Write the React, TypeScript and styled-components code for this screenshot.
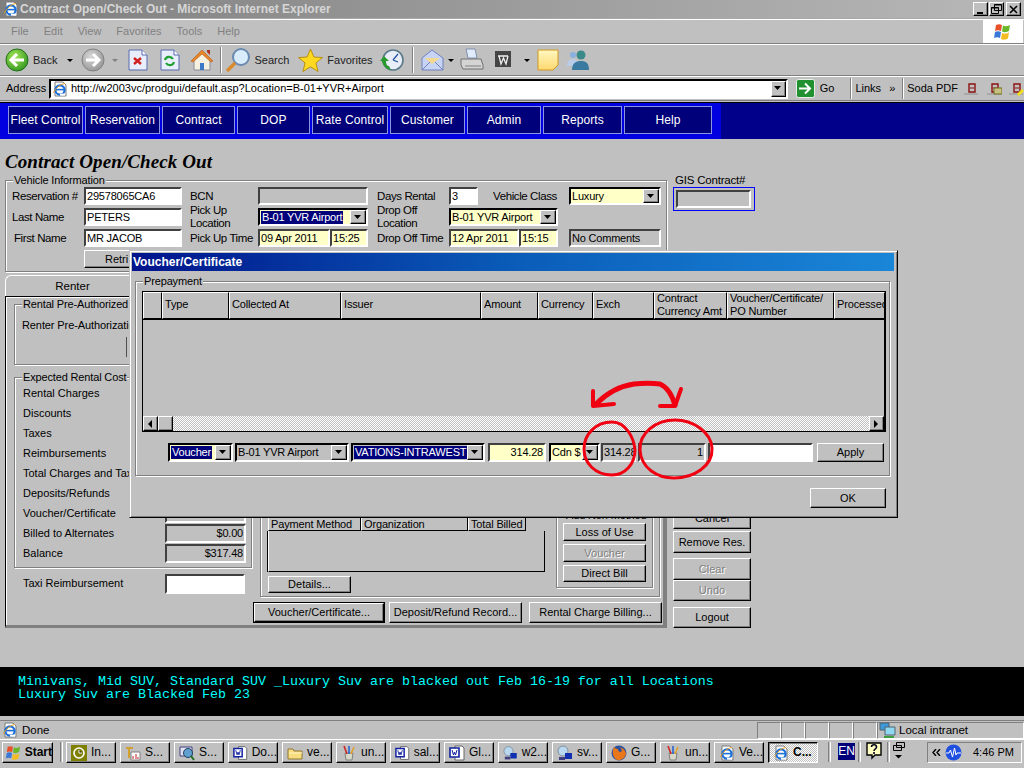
import React from "react";
import styled, { createGlobalStyle, css } from "styled-components";

const GlobalStyle = createGlobalStyle`
  html, body { margin: 0; padding: 0; background: #c0c0c0; overflow: hidden; }
  * { box-sizing: border-box; }
  #root { width: 1024px; height: 768px; }
`;

const raised = css`
  border: 1px solid;
  border-color: #fff #000 #000 #fff;
  box-shadow: inset -1px -1px 0 #808080;
`;
const sunken = css`
  border: 2px solid;
  border-color: #404040 #fff #fff #404040;
`;

const Screen = styled.div`
  position: relative;
  width: 1024px;
  height: 768px;
  overflow: hidden;
  display: flex;
  flex-direction: column;
  background: #c0c0c0;
  color: #000;
  font: 11px/13px "Liberation Sans", Arial, sans-serif;
`;

/* ---------- browser chrome ---------- */
const TitleBar = styled.div`
  height: 19px;
  flex: none;
  display: flex;
  align-items: center;
  padding: 0 3px 0 3px;
  gap: 1px;
  background: linear-gradient(90deg, #7f7f7f, #b8b8b8);
  border-bottom: 1px solid #a8a8a8;
`;
const TitleText = styled.div`
  flex: 1;
  color: #d6d6d6;
  font-size: 12px;
  font-weight: bold;
`;
const CaptionBtn = styled.div`
  width: 15px;
  height: 14px;
  background: #c0c0c0;
  ${raised}
  display: flex;
  align-items: center;
  justify-content: center;
  margin-left: ${(p: { $gap?: number }) => p.$gap ?? 0}px;
`;
const MenuBar = styled.div`
  height: 25px;
  flex: none;
  display: flex;
  align-items: center;
  padding-left: 11px;
  gap: 15px;
  position: relative;
  border-top: 1px solid #fff;
  border-bottom: 1px solid #808080;
  color: #808080;
  font-size: 11px;
`;
const FlagBox = styled.div`
  position: absolute;
  right: 1px;
  top: 0;
  width: 40px;
  height: 23px;
  background: #fff;
  display: flex;
  align-items: center;
  justify-content: center;
`;
const ToolBar = styled.div`
  height: 32px;
  flex: none;
  display: flex;
  align-items: center;
  padding-left: 5px;
  border-top: 1px solid #fff;
  border-bottom: 1px solid #808080;
  font-size: 11px;
  color: #222;
`;
const ToolLabel = styled.span<{ $l?: number; $r?: number }>`
  margin: 0 ${(p) => p.$r ?? 0}px 0 ${(p) => p.$l ?? 0}px;
  white-space: nowrap;
`;
const ToolIcon = styled.span<{ $l?: number }>`
  display: inline-flex;
  margin-left: ${(p) => p.$l ?? 0}px;
`;
const ToolSep = styled.span<{ $l: number; $r: number }>`
  width: 2px;
  height: 26px;
  border-left: 1px solid #808080;
  border-right: 1px solid #fff;
  margin: 0 ${(p) => p.$r}px 0 ${(p) => p.$l}px;
`;
const Caret = styled.span<{ $l: number; $grey?: boolean }>`
  width: 0;
  height: 0;
  margin-left: ${(p) => p.$l}px;
  border: 3px solid transparent;
  border-top: 3px solid ${(p) => (p.$grey ? "#808080" : "#000")};
  border-bottom: 0;
`;
const AddressBar = styled.div`
  height: 25px;
  flex: none;
  display: flex;
  align-items: center;
  padding-left: 6px;
  border-top: 1px solid #fff;
  border-bottom: 1px solid #808080;
  font-size: 11px;
  white-space: nowrap;
`;
const AddressLabel = styled.span`
  width: 38px;
  flex: none;
`;
const AddressField = styled.div`
  width: 741px;
  height: 20px;
  margin-left: 5px;
  background: #fff;
  ${sunken}
  border-color: #000 #fff #fff #000;
  display: flex;
  align-items: center;
  padding-left: 1px;
  gap: 3px;
  position: relative;
  white-space: nowrap;
`;
const AddrDrop = styled.div`
  position: absolute;
  right: 0;
  top: 0;
  width: 15px;
  height: 16px;
  background: #c0c0c0;
  ${raised}
  display: flex;
  align-items: center;
  justify-content: center;
`;
const AddrSep = styled.span<{ $l: number; $r: number }>`
  width: 2px;
  height: 21px;
  border-left: 1px solid #808080;
  border-right: 1px solid #fff;
  margin: 0 ${(p) => p.$r}px 0 ${(p) => p.$l}px;
`;

/* ---------- site nav ---------- */
const NavBand = styled.div`
  height: 37px;
  flex: none;
  margin-top: 1px;
  background: #00008b;
  border-top: 1px solid #000;
`;
const NavInner = styled.div`
  width: 721px;
  height: 36px;
  padding: 3px 0 0 8px;
  display: flex;
  gap: 2px;
  background: #0000e0;
`;
const NavBtn = styled.div<{ $w: number }>`
  width: ${(p) => p.$w}px;
  height: 28px;
  background: #00007a;
  border: 1px solid #8c96e0;
  color: #fff;
  font-size: 12px;
  letter-spacing: 0.1px;
  display: flex;
  align-items: center;
  justify-content: center;
  white-space: nowrap;
`;

/* ---------- page ---------- */
const Content = styled.div`
  flex: 1;
  min-height: 0;
  padding: 13px 0 0 5px;
  display: flex;
  flex-direction: column;
`;
const PageTitle = styled.h1`
  margin: 0;
  height: 20px;
  font: italic bold 19px/20px "Liberation Serif", "Times New Roman", serif;
  letter-spacing: 0.1px;
`;
const TopRow = styled.div`
  display: flex;
  margin-top: 8px;
`;
const Group = styled.div<{ $w?: number; $h?: number }>`
  position: relative;
  ${(p) => (p.$w ? `width: ${p.$w}px;` : "")}
  ${(p) => (p.$h ? `height: ${p.$h}px;` : "")}
  border: 1px solid #808080;
  box-shadow: 1px 1px 0 #fff, inset 1px 1px 0 #fff;
  flex: none;
`;
const Legend = styled.div<{ $l?: number }>`
  position: absolute;
  top: -7px;
  left: ${(p) => p.$l ?? 7}px;
  padding: 0 1px;
  background: #c0c0c0;
  white-space: nowrap;
  font-size: 11px;
  letter-spacing: -0.15px;
`;
const VehicleGrid = styled.div`
  display: grid;
  grid-template-columns: 72px 98px 8px 68px 72px 38px 9px 72px 70px 39px 11px 92px;
  grid-auto-rows: 21px;
  padding: 6px 0 0 6px;
  height: 90px;
`;
const Cell = styled.div<{ $c: number; $s?: number; $r?: number; $rs?: number }>`
  grid-column: ${(p) => p.$c} / span ${(p) => p.$s ?? 1};
  ${(p) => (p.$r ? `grid-row: ${p.$r} / span ${p.$rs ?? 1};` : "")}
  min-width: 0;
  display: flex;
  align-items: center;
  height: 18px;
  white-space: nowrap;
`;
const Label = styled.span<{ $l?: number }>`
  font-size: 11.5px;
  letter-spacing: -0.4px;
  padding-left: ${(p) => Math.max(p.$l ?? 0, 0)}px;
  line-height: 13px;
  white-space: ${(p) => (p.$l === -1 ? "normal" : "inherit")};
`;
const Field = styled.div<{ $bg?: string; $right?: boolean; $w?: number; $h?: number }>`
  ${(p) => (p.$w ? `width: ${p.$w}px; flex: none;` : "width: 100%;")}
  height: ${(p) => p.$h ?? 18}px;
  background: ${(p) => p.$bg ?? "#fff"};
  ${sunken}
  display: flex;
  align-items: center;
  justify-content: ${(p) => (p.$right ? "flex-end" : "flex-start")};
  padding: 0 1px;
  font-size: 11px;
  overflow: hidden;
  white-space: nowrap;
  letter-spacing: -0.2px;
`;
const Drop = styled.div`
  position: absolute;
  right: 0;
  top: 0;
  bottom: 0;
  width: 16px;
  background: #c0c0c0;
  ${raised}
  display: flex;
  align-items: center;
  justify-content: center;
`;
const SelectField = styled(Field)`
  position: relative;
  border-color: #000 #fff #fff #000;
`;
const Selected = styled.span`
  background: #00007b;
  color: #fff;
  padding: 0 1px;
  line-height: 13px;
`;
const Btn = styled.div<{ $w?: number; $h?: number; $off?: boolean; $def?: boolean; $pad?: number }>`
  ${(p) => (p.$w ? `width: ${p.$w}px; flex: none;` : "width: 100%;")}
  height: ${(p) => p.$h ?? 18}px;
  background: #c0c0c0;
  ${raised}
  ${(p) => (p.$def ? "outline: 1px solid #000; outline-offset: -1px; border-width: 2px;" : "")}
  display: flex;
  align-items: center;
  justify-content: ${(p) => (p.$pad ? "flex-start" : "center")};
  padding-left: ${(p) => p.$pad ?? 0}px;
  font-size: 11px;
  white-space: nowrap;
  overflow: hidden;
  color: ${(p) => (p.$off ? "#808080" : "#000")};
  text-shadow: ${(p) => (p.$off ? "1px 1px 0 #fff" : "none")};
`;
const GisBlock = styled.div`
  margin-left: 6px;
  width: 82px;
`;
const GisLabel = styled.div`
  font-size: 11.5px;
  letter-spacing: -0.2px;
  margin: -6px 0 0 2px;
  height: 13px;
`;
const GisFocus = styled.div`
  border: 1px solid #0000ff;
  width: 82px;
  height: 24px;
  padding: 2px 3px 2px 2px;
`;
const MainRow = styled.div`
  display: flex;
  margin-top: 3px;
`;
const TabColumn = styled.div`
  width: 662px;
  flex: none;
`;
const Tab = styled.div`
  width: 135px;
  height: 21px;
  border: 1px solid #000;
  border-top-color: #fff;
  border-left-color: #fff;
  border-bottom: 0;
  border-radius: 6px 0 0 0;
  display: flex;
  align-items: center;
  justify-content: center;
  font-size: 11.5px;
`;
const TabPanel = styled.div`
  height: 332px;
  border-top: 1px solid #000;
  border-left: 1px solid #000;
  border-right: 4px solid #808080;
  border-bottom: 3px solid #808080;
  box-shadow: inset 1px 1px 0 #fff;
  padding: 7px 0 0 8px;
  display: flex;
`;
const LeftColumn = styled.div`
  width: 239px;
  flex: none;
`;
const PreAuthText = styled.div`
  padding: 14px 0 0 7px;
  font-size: 11px;
  letter-spacing: -0.1px;
  white-space: nowrap;
`;
const PreAuthBtn = styled.div`
  position: absolute;
  left: 111px;
  top: 32px;
  width: 80px;
  height: 20px;
  background: #c0c0c0;
  border-left: 1px solid #505050;
`;
const CostGroup = styled(Group)`
  margin-top: 12px;
`;
const CostList = styled.div`
  padding: 5px 5px 0 8px;
`;
const CostRow = styled.div`
  height: 20px;
  display: flex;
  align-items: center;
  justify-content: space-between;
  font-size: 11px;
  white-space: nowrap;
`;
const TaxiRow = styled.div`
  display: flex;
  align-items: center;
  justify-content: space-between;
  width: 222px;
  margin: 6px 0 0 9px;
  font-size: 11px;
`;
const TaxiLabel = styled.span`
  margin-top: -2px;
`;
const RightColumn = styled.div`
  width: 410px;
  flex: none;
`;
const BillingGroup = styled(Group)`
  margin-left: 7px;
  display: flex;
  align-items: flex-end;
  padding: 0 6px 8px 7px;
  justify-content: space-between;
`;
const PaymentColumn = styled.div`
  width: 277px;
  margin-bottom: -5px;
`;
const PaymentList = styled.div`
  height: 41px;
  border: 1px solid #000;
  border-top: 0;
  border-left-color: #fff;
  box-shadow: -1px 0 0 #000;
`;
const PaymentHead = styled.div`
  display: flex;
  height: 14px;
`;
const DetailsBtn = styled(Btn)`
  margin-top: 4px;
`;
const HeadCell = styled.div<{ $w: number; $lines?: boolean }>`
  width: ${(p) => p.$w}px;
  flex: none;
  height: 100%;
  background: #c0c0c0;
  border: 1px solid;
  border-color: #fff #000 #000 #fff;
  padding-left: 2px;
  display: flex;
  align-items: center;
  font-size: 11px;
  letter-spacing: -0.15px;
  white-space: ${(p) => (p.$lines ? "pre" : "nowrap")};
  overflow: hidden;
`;
const NonMethodGroup = styled(Group)`
  padding: 0 6px 5px;
  display: flex;
  flex-direction: column;
  justify-content: flex-end;
  gap: 3px;
`;
const BottomButtons = styled.div`
  display: flex;
  gap: 4px;
  margin-top: 5px;
`;
const RentalBillingBtn = styled(Btn)`
  margin-left: 3px;
`;
const ActionColumn = styled.div`
  width: 78px;
  margin-left: 6px;
  padding-top: 232px;
  display: flex;
  flex-direction: column;
`;
const ActionBtn = styled(Btn)<{ $top?: number }>`
  margin-top: ${(p) => p.$top ?? 0}px;
`;

/* ---------- ticker & status ---------- */
const Ticker = styled.div`
  height: 49px;
  flex: none;
  background: #000;
  color: #00ffff;
  padding: 8px 0 0 18px;
  font: 13.33px/13px "Liberation Mono", "Courier New", monospace;
  white-space: pre;
`;
const StatusBar = styled.div`
  height: 19px;
  flex: none;
  margin-top: 4px;
  border-top: 1px solid #808080;
  display: flex;
  align-items: center;
  padding-left: 2px;
  font-size: 11.5px;
  gap: 4px;
`;
const StatusCells = styled.div`
  display: flex;
`;
const StatusCell = styled.div<{ $w: number }>`
  width: ${(p) => p.$w}px;
  height: 17px;
  border: 1px solid;
  border-color: #808080 #fff #fff #808080;
  flex: none;
  display: flex;
  align-items: center;
  gap: 3px;
  padding-left: 1px;
`;
const StatusFill = styled.span`
  flex: 1;
`;
const TaskBar = styled.div`
  height: 29px;
  flex: none;
  border-top: 1px solid #fff;
  padding: 2px 0 0 2px;
  display: flex;
  align-items: flex-start;
  font-size: 12px;
`;
const StartBtn = styled.div`
  width: 51px;
  height: 21px;
  background: #c0c0c0;
  ${raised}
  display: flex;
  align-items: center;
  gap: 2px;
  padding-left: 2px;
  font-weight: bold;
`;
const TaskSep = styled.span<{ $l: number; $r: number }>`
  width: 3px;
  height: 20px;
  border-left: 1px solid #808080;
  border-right: 1px solid #fff;
  margin: 0 ${(p) => p.$r}px 0 ${(p) => p.$l}px;
  flex: none;
`;
const TaskBtn = styled.div<{ $active?: boolean }>`
  width: 50px;
  height: 21px;
  margin-right: 4px;
  flex: none;
  ${raised}
  display: flex;
  align-items: center;
  gap: 4px;
  padding-left: 4px;
  white-space: nowrap;
  ${(p) =>
    p.$active
      ? `border-color:#000 #fff #fff #000; box-shadow: inset 1px 1px 0 #808080; font-weight:bold;
         background: repeating-conic-gradient(#fff 0 25%, #c0c0c0 0 50%) 0 0 / 2px 2px;`
      : "background:#c0c0c0;"}
`;
const EnBox = styled.div`
  width: 17px;
  height: 17px;
  margin-top: 1px;
  background: #00007b;
  color: #fff;
  font-size: 12px;
  display: flex;
  align-items: center;
  justify-content: center;
`;
const Tray = styled.div`
  width: 95px;
  height: 21px;
  margin-left: 22px;
  border: 1px solid;
  border-color: #808080 #fff #fff #808080;
  display: flex;
  align-items: center;
  padding-left: 4px;
  font-size: 11px;
`;

/* ---------- dialog ---------- */
const Dialog = styled.div`
  position: absolute;
  left: 129px;
  top: 250px;
  width: 769px;
  height: 268px;
  background: #c0c0c0;
  border: 1px solid;
  border-color: #c0c0c0 #000 #000 #c0c0c0;
  box-shadow: inset 1px 1px 0 #fff, inset -1px -1px 0 #808080;
  padding: 2px 3px 0 2px;
  display: flex;
  flex-direction: column;
`;
const DialogTitle = styled.div`
  height: 18px;
  flex: none;
  background: linear-gradient(90deg, #00148c 0%, #0a5cb8 50%, #1a86d8 100%);
  color: #fff;
  font-weight: bold;
  font-size: 12px;
  display: flex;
  align-items: center;
  padding-left: 1px;
`;
const PrepayGroup = styled(Group)`
  margin: 10px 0 0 3px;
  padding: 9px 0 0 6px;
`;
const GridBox = styled.div`
  width: 744px;
  height: 141px;
  border: 1px solid #000;
  border-right-width: 2px;
  display: flex;
  flex-direction: column;
`;
const GridHead = styled.div`
  display: flex;
  height: 28px;
  flex: none;
  border-bottom: 1px solid #000;
  & > div {
    padding-bottom: 2px;
  }
`;
const GridBody = styled.div`
  flex: 1;
`;
const ScrollBar = styled.div`
  height: 15px;
  flex: none;
  display: flex;
  background: repeating-conic-gradient(#fff 0 25%, #c0c0c0 0 50%) 0 0 / 2px 2px;
`;
const ScrollBtn = styled.div<{ $w?: number }>`
  width: ${(p) => p.$w ?? 15}px;
  height: 15px;
  background: #c0c0c0;
  ${raised}
  display: flex;
  align-items: center;
  justify-content: center;
  flex: none;
`;
const ScrollFill = styled.div`
  flex: 1;
`;
const EntryRow = styled.div`
  display: flex;
  align-items: flex-start;
  padding: 11px 0 0 26px;
`;
const EntryField = styled(Field)<{ $gap?: number }>`
  margin-right: ${(p) => p.$gap ?? 2}px;
`;
const EntrySelect = styled(SelectField)<{ $gap?: number }>`
  margin-right: ${(p) => p.$gap ?? 2}px;
`;
const DialogFooter = styled.div`
  display: flex;
  justify-content: flex-end;
  padding: 12px 8px 0 0;
`;
const Annotation = styled.svg`
  position: absolute;
  left: 0;
  top: 0;
  pointer-events: none;
`;

/* ---------- icons ---------- */
const IeIcon = ({ s = 16, page = false }: { s?: number; page?: boolean }) => (
  <svg width={s} height={s} viewBox="0 0 16 16">
    {page && <path d="M3 1h8l3 3v11H3z" fill="#fff" stroke="#7a7a7a" />}
    <circle cx="8" cy="9" r="4.6" fill="none" stroke="#1c6fd8" strokeWidth="2.2" />
    <path d="M3.5 8.6h9" stroke="#1c6fd8" strokeWidth="1.6" />
    <path d="M8 13.6h5" stroke="#fff" strokeWidth="2" />
    <path d="M1.5 12C3 8 8 3 13 2.5" stroke="#e8a020" strokeWidth="1" fill="none" />
  </svg>
);
const ArrowCircle = ({ a, b, c, dir = 1 }: { a: string; b: string; c: string; dir?: number }) => (
  <svg width="24" height="24" viewBox="0 0 24 24">
    <defs>
      <radialGradient id={`g${a.slice(1)}`} cx="0.4" cy="0.35" r="0.8">
        <stop offset="0" stopColor={a} />
        <stop offset="1" stopColor={b} />
      </radialGradient>
    </defs>
    <circle cx="12" cy="12" r="11" fill={`url(#g${a.slice(1)})`} stroke={c} />
    <path
      d={dir > 0 ? "M19 12H7m5-6-6 6 6 6" : "M5 12h12m-5-6 6 6-6 6"}
      stroke="#fff"
      strokeWidth="3"
      fill="none"
    />
  </svg>
);
const PageIcon = ({ children }: { children: React.ReactNode }) => (
  <svg width="20" height="22" viewBox="0 0 20 22">
    <path d="M1 1h13l5 5v15H1z" fill="#e8eefc" stroke="#5a6ab0" />
    <path d="M14 1v5h5" fill="#fff" stroke="#5a6ab0" />
    {children}
  </svg>
);
const HomeIcon = () => (
  <svg width="24" height="24" viewBox="0 0 24 24">
    <path d="M4 12v10h16V12L12 5z" fill="#f5f0e0" stroke="#8a8a9a" />
    <path d="M1 13 12 2l11 11-2 1-9-8-9 8z" fill="#e8852a" stroke="#b05a10" strokeWidth=".6" />
    <path d="M10 15h4v7h-4z" fill="#3c78c8" />
    <path d="M17 2h3v5l-3-3z" fill="#b03020" />
  </svg>
);
const SearchIcon = () => (
  <svg width="26" height="26" viewBox="0 0 26 26">
    <circle cx="16" cy="10" r="8" fill="#d8ecfc" stroke="#6a8ab0" strokeWidth="2" />
    <path d="M10 16 2 24" stroke="#d88a30" strokeWidth="3.4" />
  </svg>
);
const StarIcon = () => (
  <svg width="25" height="25" viewBox="0 0 25 25">
    <path d="M12.5 1l3.4 8 8.6.6-6.6 5.4 2.2 8.5-7.6-4.7-7.6 4.7 2.2-8.5L.5 9.6l8.6-.6z" fill="#ffd820" stroke="#b89010" />
  </svg>
);
const HistoryIcon = () => (
  <svg width="24" height="24" viewBox="0 0 24 24">
    <circle cx="13" cy="12" r="10" fill="#e8eef8" stroke="#5a7a8a" strokeWidth="1.6" />
    <path d="M13 12 18 6M13 12l5 2" stroke="#2050a0" strokeWidth="1.2" />
    <path d="M2 13c1 5 4 8 9 9l-2-4c-2 0-3-2-3-5h3L4 8 0 13z" fill="#2a9a30" />
  </svg>
);
const MailIcon = () => (
  <svg width="23" height="22" viewBox="0 0 23 22">
    <path d="M1 9 11 1l11 8v12H1z" fill="#c8d4f4" stroke="#7080c0" />
    <path d="M4 9h15l-8 6z" fill="#f4d890" />
    <path d="M1 21 9 13M22 21l-8-8" stroke="#7080c0" />
  </svg>
);
const PrintIcon = () => (
  <svg width="24" height="24" viewBox="0 0 24 24">
    <path d="M6 1h9l2 9H8z" fill="#e0ecfc" stroke="#8090b0" />
    <path d="M1 11h20l2 6v4H3l-2-4z" fill="#d4d4d4" stroke="#707070" />
    <path d="M5 18h16" stroke="#808080" />
  </svg>
);
const EditIcon = () => (
  <svg width="18" height="18" viewBox="0 0 18 18">
    <path d="M0 0h16v16H0z" fill="#444" />
    <path d="M3 5h10M4 5l2 8 2.500-6 2.500 6 2-8" stroke="#eee" strokeWidth="1.3" fill="none" />
  </svg>
);
const NoteIcon = () => (
  <svg width="22" height="22" viewBox="0 0 22 22">
    <defs>
      <linearGradient id="note" x1="0" y1="0" x2="0" y2="1">
        <stop offset="0" stopColor="#fff8c0" />
        <stop offset="1" stopColor="#ffd870" />
      </linearGradient>
    </defs>
    <path d="M1 1h20v15l-5 5H1z" fill="url(#note)" stroke="#d09a20" />
  </svg>
);
const BuddyIcon = () => (
  <svg width="24" height="22" viewBox="0 0 24 22">
    <circle cx="7" cy="6" r="3" fill="#8ab0e0" />
    <path d="M1 17c0-5 3-7 6-7s5 2 5 7z" fill="#b8cce8" />
    <circle cx="15" cy="6" r="4.500" fill="#3a8a8a" />
    <path d="M6 21c0-7 4-9 9-9s8 2 8 9z" fill="#3a7aa0" />
  </svg>
);
const Flag = ({ s = 20 }: { s?: number }) => (
  <svg width={s} height={s} viewBox="0 0 20 20">
    <path d="M3 3c2-1 4-1 6 0l-1 6c-2-1-4-1-6 0z" fill="#e8502a" />
    <path d="M10 3.500c2 1 4 1 7-.5l-1 6c-3 1.500-5 1.500-7 .5z" fill="#6ab82a" />
    <path d="M2 10c2-1 4-1 6 0l-1 6c-2-1-4-1-6 0z" fill="#3a78d8" />
    <path d="M9 11c2 1 4 1 7-.5l-1 6c-3 1.500-5 1.500-7 .5z" fill="#f4bc20" />
  </svg>
);
const GoIcon = () => (
  <svg width="19" height="19" viewBox="0 0 19 19">
    <rect x=".5" y=".5" width="18" height="18" rx="2" fill="#209030" stroke="#e8f0e8" />
    <path d="M3 9.500h11m-5-5 5 5-5 5" stroke="#fff" strokeWidth="2" fill="none" />
  </svg>
);
const SodaIcon = ({ extra }: { extra?: "mail" | "pen" }) => (
  <svg width="15" height="15" viewBox="0 0 15 15">
    <path d="M5 3h6v8H5z" fill="none" stroke="#8a1010" strokeWidth="1.4" />
    <path d="M6 7h4" stroke="#8a1010" />
    <path d="M0 13h14" stroke="#909090" />
    {extra === "mail" && <path d="M7 7h8v6H7z" fill="#c8c080" stroke="#707020" />}
    {extra === "pen" && <path d="M9 14l5-5" stroke="#f0e020" strokeWidth="3" />}
  </svg>
);
const DownArrow = () => (
  <svg width="8" height="5" viewBox="0 0 8 5">
    <path d="M0 0h7L3.500 4z" fill="#000" />
  </svg>
);
const SideArrow = ({ left }: { left?: boolean }) => (
  <svg width="5" height="8" viewBox="0 0 5 8">
    <path d={left ? "M4 0v8L0 4z" : "M0 0v8l4-4z"} fill="#000" />
  </svg>
);
const WordIcon = () => (
  <svg width="16" height="16" viewBox="0 0 16 16">
    <path d="M6 1h7l2 2v12H6z" fill="#fff" stroke="#666" />
    <path d="M1 3h9v9H1z" fill="#fff" stroke="#1020a0" strokeWidth="1.600" />
    <path d="M3 5l1.500 5L5.500 7l1 3L8 5" stroke="#1020a0" fill="none" />
  </svg>
);
const FolderIcon = () => (
  <svg width="16" height="16" viewBox="0 0 16 16">
    <path d="M1 4h5l1 2h8v8H1z" fill="#f8dc80" stroke="#907830" />
    <path d="M2 8h13" stroke="#fff4c0" />
  </svg>
);
const TimerIcon = () => (
  <svg width="16" height="16" viewBox="0 0 16 16">
    <path d="M0 0h16v16H0z" fill="#808000" />
    <circle cx="8" cy="8" r="5" fill="none" stroke="#fff" strokeWidth="1.600" />
    <path d="M8 5v3h3" stroke="#fff" />
  </svg>
);
const ToolsIcon = () => (
  <svg width="16" height="16" viewBox="0 0 16 16">
    <path d="M6 7h9v8H6z" fill="#fff" stroke="#808080" />
    <path d="M8 11v3M11 9v5M13 12v2" stroke="#c02020" />
    <path d="M1 2h7v2H5v9H3V4H1z" fill="#d0a030" />
  </svg>
);
const GlobeIcon = () => (
  <svg width="16" height="16" viewBox="0 0 16 16">
    <path d="M1 2h12v9H1z" fill="#e0e0f0" stroke="#404080" />
    <circle cx="9" cy="8" r="4.500" fill="#60a0d0" stroke="#204060" />
    <path d="M12 11l3 4" stroke="#207020" strokeWidth="2" />
  </svg>
);
const PaintIcon = () => (
  <svg width="16" height="16" viewBox="0 0 16 16">
    <path d="M4 8h8l-1 7H5z" fill="#d8d8c8" stroke="#808080" />
    <path d="M6 9 3 1" stroke="#d02020" strokeWidth="1.500" />
    <path d="M8 9V1" stroke="#2060d0" strokeWidth="1.500" />
    <path d="M10 9l3-7" stroke="#e0a020" strokeWidth="1.500" />
  </svg>
);
const NetIcon = () => (
  <svg width="16" height="16" viewBox="0 0 16 16">
    <circle cx="6" cy="6" r="5" fill="#b8d8f0" stroke="#8090a0" />
    <path d="M8 8h7v6H8z" fill="#1030b0" />
    <path d="M2 12h6v3H2z" fill="#404080" />
  </svg>
);
const FoxIcon = () => (
  <svg width="16" height="16" viewBox="0 0 16 16">
    <circle cx="8" cy="8" r="7.500" fill="#2a50a0" />
    <path d="M3 2C1 6 1 12 6 15c5 1 9-3 9-7-1-3-3-5-6-6 2 2 2 4 1 5-2 0-3-1-3-3-2 0-3-1-4-2z" fill="#e8761a" />
  </svg>
);
const HelpIcon = () => (
  <svg width="16" height="18" viewBox="0 0 16 18">
    <path d="M1 1h14v12H9l-3 3v-3H1z" fill="#ffffc0" stroke="#000" strokeWidth="1.400" />
    <path d="M5.500 5c0-3 5-3 5 0 0 2-2.500 2-2.500 4M8 10v2" stroke="#000020" strokeWidth="1.600" fill="none" />
  </svg>
);
const WindowsIcon = () => (
  <svg width="12" height="18" viewBox="0 0 12 18">
    <path d="M3.500.5h8v5h-8zM.5 3.500h8v5h-8z" fill="#c0c0c0" stroke="#000" />
    <path d="M2 13h7l-3.500 3.500z" fill="#000" />
  </svg>
);
const PulseIcon = () => (
  <svg width="17" height="17" viewBox="0 0 17 17">
    <circle cx="8.500" cy="8.500" r="8" fill="#2050e0" />
    <path d="M1 9h3l1.500-3 2 7 2-9 1.500 7 1-2h4" stroke="#fff" fill="none" />
  </svg>
);
const DoubleChevron = () => (
  <svg width="9" height="7" viewBox="0 0 9 7">
    <path d="M4 0 1 3.500 4 7M8 0 5 3.500 8 7" stroke="#000" strokeWidth="1.400" fill="none" />
  </svg>
);
const NetZoneIcon = () => (
  <svg width="17" height="17" viewBox="0 0 17 17">
    <path d="M1 1h9v7H1z" fill="#3a9ad8" stroke="#506070" />
    <path d="M6 5h10v8H6z" fill="#90d8f0" stroke="#506070" />
    <path d="M5 15h10" stroke="#40a040" strokeWidth="2" />
  </svg>
);

const navItems: [string, number][] = [
  ["Fleet Control", 75], ["Reservation", 75], ["Contract", 73], ["DOP", 73], ["Rate Control", 76],
  ["Customer", 75], ["Admin", 74], ["Reports", 79], ["Help", 88],
];
const gridCols: [string, number, boolean?][] = [
  ["", 19], ["Type", 67], ["Collected At", 112], ["Issuer", 140], ["Amount", 57], ["Currency", 55], ["Exch", 61],
  ["Contract\nCurrency Amt", 73, true], ["Voucher/Certificate/\nPO Number", 107, true], ["Processed", 51],
];
const costRows: [string, string?][] = [
  ["Rental Charges"], ["Discounts"], ["Taxes"], ["Reimbursements"], ["Total Charges and Taxes"],
  ["Deposits/Refunds"], ["Voucher/Certificate"], ["Billed to Alternates", "$0.00"], ["Balance", "$317.48"],
];
const taskItems: [React.ReactNode, string][] = [
  [<TimerIcon />, "In..."], [<ToolsIcon />, "S..."], [<GlobeIcon />, "S..."], [<WordIcon />, "Do..."],
  [<FolderIcon />, "ve..."], [<PaintIcon />, "un..."], [<WordIcon />, "sal..."], [<WordIcon />, "Gl..."],
  [<NetIcon />, "w2..."], [<NetIcon />, "sv..."], [<FoxIcon />, "G..."], [<PaintIcon />, "un..."],
  [<IeIcon page />, "Ve..."],
];

export default function App() {
  return (
    <Screen>
      <GlobalStyle />
      <TitleBar>
        <IeIcon page />
        <TitleText>Contract Open/Check Out - Microsoft Internet Explorer</TitleText>
        <CaptionBtn>
          <svg width="9" height="9" viewBox="0 0 9 9"><path d="M1 7h6v2H1z" fill="#000" /></svg>
        </CaptionBtn>
        <CaptionBtn $gap={0}>
          <svg width="11" height="10" viewBox="0 0 11 10">
            <path d="M3.500.5h7v6h-7zM.5 3.500h7v6h-7z" fill="none" stroke="#000" />
            <path d="M3 1h8M0 4h8" stroke="#000" />
          </svg>
        </CaptionBtn>
        <CaptionBtn $gap={1}>
          <svg width="9" height="9" viewBox="0 0 9 9"><path d="M1 1l7 7M8 1 1 8" stroke="#000" strokeWidth="1.600" /></svg>
        </CaptionBtn>
      </TitleBar>
      <MenuBar>
        {["File", "Edit", "View", "Favorites", "Tools", "Help"].map((m) => (
          <span key={m}>{m}</span>
        ))}
        <FlagBox><Flag /></FlagBox>
      </MenuBar>
      <ToolBar>
        <ArrowCircle a="#a8e858" b="#208a18" c="#207018" />
        <ToolLabel $l={4}>Back</ToolLabel>
        <Caret $l={10} />
        <ToolIcon $l={8}><ArrowCircle a="#d8d8d8" b="#8c8c8c" c="#808080" dir={-1} /></ToolIcon>
        <Caret $l={7} $grey />
        <ToolIcon $l={10}>
          <PageIcon><path d="M6 9l7 6M13 9l-7 6" stroke="#d02020" strokeWidth="2.400" /></PageIcon>
        </ToolIcon>
        <ToolIcon $l={12}>
          <PageIcon><path d="M5 11c1-4 6-4 8-1M14 13c-1 4-6 4-8 1" stroke="#20a030" strokeWidth="2.200" fill="none" /></PageIcon>
        </ToolIcon>
        <ToolIcon $l={10}><HomeIcon /></ToolIcon>
        <ToolSep $l={6} $r={3} />
        <SearchIcon />
        <ToolLabel $l={3}>Search</ToolLabel>
        <ToolIcon $l={9}><StarIcon /></ToolIcon>
        <ToolLabel $l={4}>Favorites</ToolLabel>
        <ToolIcon $l={7}><HistoryIcon /></ToolIcon>
        <ToolSep $l={8} $r={7} />
        <MailIcon />
        <Caret $l={4} />
        <ToolIcon $l={6}><PrintIcon /></ToolIcon>
        <ToolIcon $l={11}><EditIcon /></ToolIcon>
        <Caret $l={11} />
        <ToolIcon $l={7}><NoteIcon /></ToolIcon>
        <ToolIcon $l={7}><BuddyIcon /></ToolIcon>
      </ToolBar>
      <AddressBar>
        <AddressLabel>Address</AddressLabel>
        <AddressField>
          <IeIcon page />
          <span>http://w2003vc/prodgui/default.asp?Location=B-01+YVR+Airport</span>
          <AddrDrop><DownArrow /></AddrDrop>
        </AddressField>
        <ToolIcon $l={8}><GoIcon /></ToolIcon>
        <ToolLabel $l={5}>Go</ToolLabel>
        <AddrSep $l={16} $r={3} />
        <span>Links</span>
        <ToolLabel $l={8}>»</ToolLabel>
        <AddrSep $l={7} $r={3} />
        <span>Soda PDF</span>
        <ToolIcon $l={6}><SodaIcon /></ToolIcon>
        <ToolIcon $l={8}><SodaIcon extra="mail" /></ToolIcon>
        <ToolIcon $l={7}><SodaIcon extra="pen" /></ToolIcon>
      </AddressBar>

      <NavBand>
        <NavInner>
          {navItems.map(([label, w]) => (
            <NavBtn key={label} $w={w}>{label}</NavBtn>
          ))}
        </NavInner>
      </NavBand>

      <Content>
        <PageTitle>Contract Open/Check Out</PageTitle>
        <TopRow>
          <Group $w={662}>
            <Legend>Vehicle Information</Legend>
            <VehicleGrid>
              <Cell $c={1} $r={1}><Label>Reservation #</Label></Cell>
              <Cell $c={2} $r={1}><Field>29578065CA6</Field></Cell>
              <Cell $c={4} $r={1}><Label>BCN</Label></Cell>
              <Cell $c={5} $s={2} $r={1}><Field $bg="#c0c0c0" /></Cell>
              <Cell $c={8} $r={1}><Label>Days Rental</Label></Cell>
              <Cell $c={9} $s={2} $r={1}>
                <Field $w={29}>3</Field>
                <Label $l={15}>Vehicle Class</Label>
              </Cell>
              <Cell $c={12} $r={1}>
                <SelectField $bg="#ffffc8">Luxury<Drop><DownArrow /></Drop></SelectField>
              </Cell>

              <Cell $c={1} $r={2}><Label>Last Name</Label></Cell>
              <Cell $c={2} $r={2}><Field>PETERS</Field></Cell>
              <Cell $c={4} $r={2}><Label $l={-1}>Pick Up Location</Label></Cell>
              <Cell $c={5} $s={2} $r={2}>
                <SelectField $bg="#ffffc8"><Selected>B-01 YVR Airport</Selected><Drop><DownArrow /></Drop></SelectField>
              </Cell>
              <Cell $c={8} $r={2}><Label $l={-1}>Drop Off Location</Label></Cell>
              <Cell $c={9} $s={2} $r={2}>
                <SelectField $bg="#ffffc8">B-01 YVR Airport<Drop><DownArrow /></Drop></SelectField>
              </Cell>

              <Cell $c={1} $r={3}><Label $l={2}>First Name</Label></Cell>
              <Cell $c={2} $r={3}><Field>MR JACOB</Field></Cell>
              <Cell $c={4} $r={3}><Label>Pick Up Time</Label></Cell>
              <Cell $c={5} $r={3}><Field $bg="#ffffc8">09 Apr 2011</Field></Cell>
              <Cell $c={6} $r={3}><Field $bg="#ffffc8">15:25</Field></Cell>
              <Cell $c={8} $r={3}><Label>Drop Off Time</Label></Cell>
              <Cell $c={9} $r={3}><Field $bg="#ffffc8">12 Apr 2011</Field></Cell>
              <Cell $c={10} $r={3}><Field $bg="#ffffc8">15:15</Field></Cell>
              <Cell $c={12} $r={3}><Field $bg="#c0c0c0">No Comments</Field></Cell>

              <Cell $c={2} $r={4}><Btn $pad={20}>Retri</Btn></Cell>
              <Cell $c={12} $r={4}><Btn /></Cell>
            </VehicleGrid>
          </Group>
          <GisBlock>
            <GisLabel>GIS Contract#</GisLabel>
            <GisFocus><Field $bg="#c0c0c0" /></GisFocus>
          </GisBlock>
        </TopRow>

        <MainRow>
          <TabColumn>
            <Tab>Renter</Tab>
            <TabPanel>
              <LeftColumn>
                <Group $w={238} $h={61}>
                  <Legend>Rental Pre-Authorized</Legend>
                  <PreAuthText>Renter Pre-Authorization</PreAuthText>
                  <PreAuthBtn />
                </Group>
                <CostGroup $w={238} $h={191}>
                  <Legend>Expected Rental Cost</Legend>
                  <CostList>
                    {costRows.map(([label, value]) => (
                      <CostRow key={label}>
                        <span>{label}</span>
                        <Field $w={81} $h={19} $bg="#c0c0c0" $right>{value}</Field>
                      </CostRow>
                    ))}
                  </CostList>
                </CostGroup>
                <TaxiRow>
                  <TaxiLabel>Taxi Reimbursement</TaxiLabel>
                  <Field $w={80} $h={20} />
                </TaxiRow>
              </LeftColumn>
              <RightColumn>
                <BillingGroup $w={400} $h={293}>
                  <PaymentColumn>
                    <PaymentHead>
                      <HeadCell $w={93}>Payment Method</HeadCell>
                      <HeadCell $w={107}>Organization</HeadCell>
                      <HeadCell $w={58}>Total Billed</HeadCell>
                    </PaymentHead>
                    <PaymentList />
                    <DetailsBtn $w={83} $h={17}>Details...</DetailsBtn>
                  </PaymentColumn>
                  <NonMethodGroup $w={97} $h={73}>
                    <Legend $l={8}>Add Non Method</Legend>
                    <Btn $h={18}>Loss of Use</Btn>
                    <Btn $h={18} $off>Voucher</Btn>
                    <Btn $h={17}>Direct Bill</Btn>
                  </NonMethodGroup>
                </BillingGroup>
                <BottomButtons>
                  <Btn $w={132} $h={21} $def>Voucher/Certificate...</Btn>
                  <Btn $w={133} $h={21}>Deposit/Refund Record...</Btn>
                  <RentalBillingBtn $w={133} $h={21}>Rental Charge Billing...</RentalBillingBtn>
                </BottomButtons>
              </RightColumn>
            </TabPanel>
          </TabColumn>
          <ActionColumn>
            <ActionBtn $h={22}>Cancel</ActionBtn>
            <ActionBtn $h={22} $top={2}>Remove Res.</ActionBtn>
            <ActionBtn $h={22} $top={5} $off>Clear</ActionBtn>
            <ActionBtn $h={21} $off>Undo</ActionBtn>
            <ActionBtn $h={21} $top={6}>Logout</ActionBtn>
          </ActionColumn>
        </MainRow>
      </Content>

      <Ticker>
        {"Minivans, Mid SUV, Standard SUV _Luxury Suv are blacked out Feb 16-19 for all Locations\nLuxury Suv are Blacked Feb 23"}
      </Ticker>
      <StatusBar>
        <IeIcon page />
        <StatusFill>Done</StatusFill>
        <StatusCells>
          {[24, 24, 24, 24, 24].map((w, i) => <StatusCell key={i} $w={w} />)}
          <StatusCell $w={147}><NetZoneIcon />Local intranet</StatusCell>
        </StatusCells>
      </StatusBar>
      <TaskBar>
        <StartBtn><Flag s={18} />Start</StartBtn>
        <TaskSep $l={7} $r={3} />
        {taskItems.map(([icon, label], i) => (
          <TaskBtn key={i}>{icon}<span>{label}</span></TaskBtn>
        ))}
        <TaskBtn $active><IeIcon page /><span>C...</span></TaskBtn>
        <TaskSep $l={6} $r={7} />
        <EnBox>EN</EnBox>
        <TaskSep $l={3} $r={5} />
        <HelpIcon />
        <TaskSep $l={5} $r={3} />
        <WindowsIcon />
        <Tray>
          <DoubleChevron />
          <ToolIcon $l={4}><PulseIcon /></ToolIcon>
          <ToolLabel $l={11}>4:46 PM</ToolLabel>
        </Tray>
      </TaskBar>

      <Dialog>
        <DialogTitle>Voucher/Certificate</DialogTitle>
        <PrepayGroup $w={755} $h={195}>
          <Legend>Prepayment</Legend>
          <GridBox>
            <GridHead>
              {gridCols.map(([label, w, lines], i) => (
                <HeadCell key={i} $w={w} $lines={lines}>{label}</HeadCell>
              ))}
            </GridHead>
            <GridBody />
            <ScrollBar>
              <ScrollBtn><SideArrow left /></ScrollBtn>
              <ScrollBtn />
              <ScrollFill />
              <ScrollBtn><SideArrow /></ScrollBtn>
            </ScrollBar>
          </GridBox>
          <EntryRow>
            <EntrySelect $w={65} $h={19} $bg="#ffffc8"><Selected>Voucher</Selected><Drop><DownArrow /></Drop></EntrySelect>
            <EntrySelect $w={114} $h={19} $bg="#c0c0c0">B-01 YVR Airport<Drop><DownArrow /></Drop></EntrySelect>
            <EntrySelect $w={134} $h={19} $bg="#c0c0c0" $gap={3}><Selected>VATIONS-INTRAWEST</Selected><Drop><DownArrow /></Drop></EntrySelect>
            <EntryField $w={58} $h={19} $bg="#ffffc8" $right $gap={3}>314.28</EntryField>
            <EntrySelect $w={51} $h={19} $bg="#ffffc8" $gap={1}>Cdn $<Drop><DownArrow /></Drop></EntrySelect>
            <EntryField $w={35} $h={19} $bg="#c0c0c0" $gap={2}>314.28</EntryField>
            <EntryField $w={68} $h={19} $bg="#c0c0c0" $right $gap={2}>1</EntryField>
            <EntryField $w={105} $h={19} $gap={4} />
            <Btn $w={67} $h={19}>Apply</Btn>
          </EntryRow>
        </PrepayGroup>
        <DialogFooter>
          <Btn $w={76} $h={20}>OK</Btn>
        </DialogFooter>
      </Dialog>

      <Annotation width="1024" height="768" viewBox="0 0 1024 768">
        <g fill="none" stroke="#f00010" strokeWidth="3">
          <path d="M612 422c14 0 22 16 23 28 0 14-10 25-23 25-17 0-28-12-28-26 0-15 12-27 28-27z" />
          <path d="M675 420c18 0 36 12 37 28 1 18-18 30-38 30-17 0-33-10-34-28-1-17 16-30 35-30z" />
        </g>
        <g fill="none" stroke="#f00010" strokeWidth="4" strokeLinejoin="round" strokeLinecap="round">
          <path d="M596 404c10-10 24-18 38-20 10-1 18-1 26 0 7 3 12 11 15 21" strokeWidth="5" />
          <path d="M593 391v15l21-2" />
          <path d="M681 389l-6 17-15 0" />
        </g>
      </Annotation>
    </Screen>
  );
}
